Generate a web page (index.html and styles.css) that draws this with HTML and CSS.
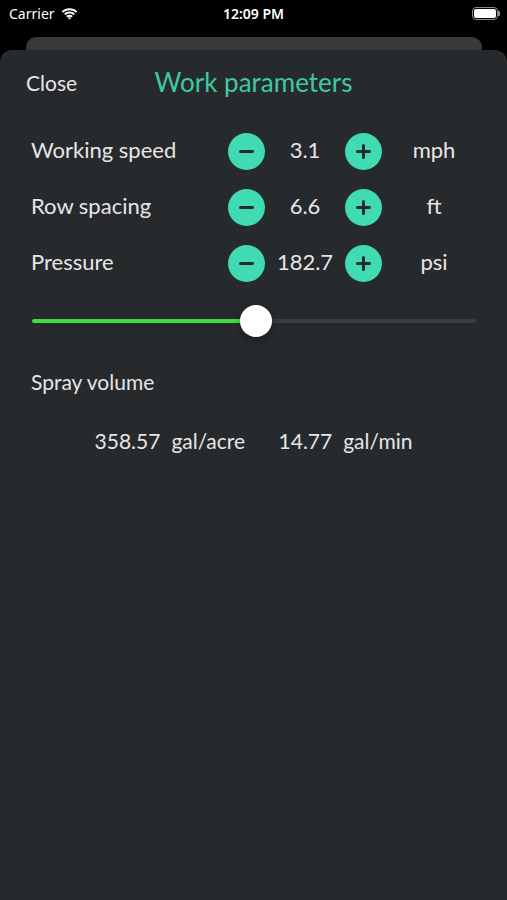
FILE: index.html
```html
<!DOCTYPE html>
<html lang="en">
<head>
    <meta charset="UTF-8">
    <meta name="viewport" content="width=device-width, initial-scale=1.0">
    <title>Work parameters</title>
    <link rel="stylesheet" href="styles.css">
</head>
<body>
    <div class="status-bar">
        <div class="status-left">
            <span>Carrier</span>
            <svg class="wifi" width="17" height="12" viewBox="0 0 17 12">
                <path d="M8.5 2.2c2.5 0 4.8 1 6.5 2.6l1.3-1.4C14.2 1.4 11.5.3 8.5.3S2.8 1.4.7 3.4L2 4.8c1.7-1.6 4-2.6 6.5-2.6z" fill="#fff"/>
                <path d="M8.5 5.5c1.6 0 3 .6 4.1 1.6l1.3-1.4C12.5 4.4 10.6 3.6 8.5 3.6S4.5 4.4 3.1 5.7l1.3 1.4c1.1-1 2.5-1.6 4.1-1.6z" fill="#fff"/>
                <path d="M8.5 8.7c.8 0 1.5.3 2 .8l1.3-1.4c-.9-.8-2-1.3-3.3-1.3s-2.4.5-3.3 1.3l1.3 1.4c.5-.5 1.2-.8 2-.8zM8.5 11.6l1.6-1.7c-.4-.4-1-.6-1.6-.6s-1.2.2-1.6.6z" fill="#fff"/>
            </svg>
        </div>
        <div class="status-time">12:09 PM</div>
        <div class="status-right">
            <div class="battery"><div class="battery-fill"></div></div>
            <div class="battery-tip"></div>
        </div>
    </div>

    <div class="back-card"></div>

    <div class="sheet">
        <div class="sheet-header">
            <span class="close">Close</span>
            <span class="title">Work parameters</span>
        </div>

        <div class="params">
            <div class="param-row">
                <span class="param-label">Working speed</span>
                <span class="step-btn minus"></span>
                <span class="param-value">3.1</span>
                <span class="step-btn plus"></span>
                <span class="param-unit">mph</span>
            </div>
            <div class="param-row">
                <span class="param-label">Row spacing</span>
                <span class="step-btn minus"></span>
                <span class="param-value">6.6</span>
                <span class="step-btn plus"></span>
                <span class="param-unit">ft</span>
            </div>
            <div class="param-row">
                <span class="param-label">Pressure</span>
                <span class="step-btn minus"></span>
                <span class="param-value">182.7</span>
                <span class="step-btn plus"></span>
                <span class="param-unit">psi</span>
            </div>
        </div>

        <div class="slider">
            <div class="slider-fill" style="width: 50.5%"></div>
            <div class="slider-rest"></div>
            <div class="slider-thumb" style="left: 50.5%"></div>
        </div>

        <div class="volume-label">Spray volume</div>
        <div class="volume-values">
            <span>358.57</span><span class="unit">gal/acre</span>
            <span class="second">14.77</span><span class="unit">gal/min</span>
        </div>
    </div>
</body>
</html>
```

FILE: styles.css
```css
* {
    box-sizing: border-box;
}
html, body {
    height: 100%;
}
body {
    margin: 0;
    background-color: #000000;
    font-family: Lato, "Noto Sans", sans-serif;
    color: #e6e6e6;
    display: flex;
    flex-direction: column;
    overflow: hidden;
}
.status-bar {
    height: 37px;
    display: flex;
    align-items: center;
    justify-content: space-between;
    padding: 0 7px 10px 9px;
    color: #ffffff;
    font-family: "Noto Sans", sans-serif;
    font-size: 14px;
    position: relative;
}
.status-left {
    display: flex;
    align-items: center;
    gap: 6px;
}
.status-time {
    position: absolute;
    left: 0;
    right: 0;
    top: 4px;
    text-align: center;
    font-weight: 600;
}
.status-right {
    display: flex;
    align-items: center;
}
.battery {
    width: 26px;
    height: 13px;
    border: 1px solid #8a8a8a;
    border-radius: 4px;
    padding: 1px;
}
.battery-fill {
    height: 100%;
    background-color: #ffffff;
    border-radius: 2px;
}
.battery-tip {
    width: 2px;
    height: 5px;
    background-color: #8a8a8a;
    border-radius: 0 1px 1px 0;
}
.back-card {
    height: 13px;
    margin: 0 25px 0 26px;
    background-color: #38393b;
    border-radius: 10px 10px 0 0;
}
.sheet {
    flex: 1;
    background-color: #272a2d;
    border-radius: 12px 12px 0 0;
}
.sheet-header {
    height: 66px;
    padding: 0 26px 2px;
    display: flex;
    align-items: center;
    position: relative;
}
.close {
    font-size: 21px;
    color: #e6e6e6;
}
.title {
    position: absolute;
    left: 0;
    right: 0;
    text-align: center;
    font-size: 26px;
    color: #3fc9a0;
    pointer-events: none;
}
.params {
    padding-top: 7px;
}
.param-row {
    display: grid;
    grid-template-columns: 197px 37px 80px 37px 104px;
    align-items: center;
    height: 56px;
    padding-left: 31px;
    font-size: 22px;
}
.param-label,
.param-value,
.param-unit {
    padding-bottom: 3px;
}
.param-value,
.param-unit {
    text-align: center;
}
.step-btn {
    width: 37px;
    height: 37px;
    border-radius: 50%;
    background-color: #40dab3;
    position: relative;
}
.step-btn::before,
.step-btn::after {
    content: "";
    position: absolute;
    left: 50%;
    top: 50%;
    background-color: #272a2d;
    border-radius: 2px;
}
.step-btn::before {
    width: 15px;
    height: 3px;
    margin: -1.5px 0 0 -7.5px;
}
.plus::after {
    width: 3px;
    height: 15px;
    margin: -7.5px 0 0 -1.5px;
}
.slider {
    position: relative;
    height: 60px;
    margin: 0 31px 0 32px;
    display: flex;
    align-items: center;
}
.slider-fill {
    height: 4px;
    background-color: #3fdc46;
    border-radius: 2px 0 0 2px;
}
.slider-rest {
    flex: 1;
    height: 4px;
    background-color: #3a3d40;
    border-radius: 0 2px 2px 0;
}
.slider-thumb {
    position: absolute;
    top: 14px;
    width: 32px;
    height: 32px;
    margin-left: -16px;
    border-radius: 50%;
    background-color: #ffffff;
    box-shadow: 0 3px 8px rgba(0, 0, 0, 0.3);
}
.volume-label {
    font-size: 21px;
    padding: 18px 0 0 31px;
    height: 66px;
}
.volume-values {
    text-align: center;
    font-size: 21px;
    padding-top: 11px;
}
.volume-values .unit {
    margin-left: 11px;
}
.volume-values .second {
    margin-left: 28px;
}
```
